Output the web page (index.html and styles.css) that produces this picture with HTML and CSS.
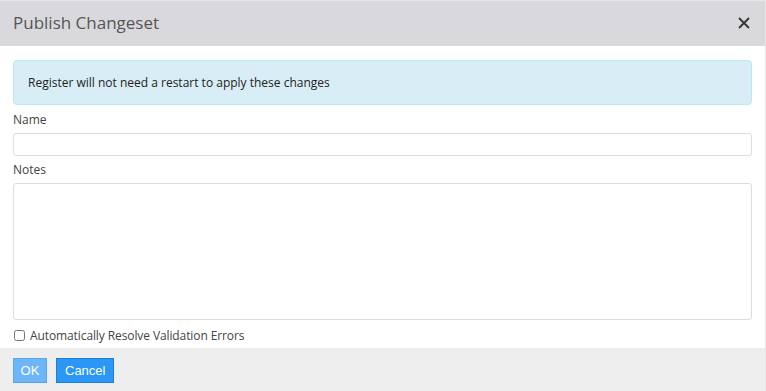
FILE: index.html
```html
<!DOCTYPE html>
<html>
  <head>
    <title>Publish Changeset</title>
    <meta charset="utf-8" />
    <link rel="stylesheet" href="styles.css">
  </head>
  <body>
    <div class="dialog">
      <div class="dialog_header">
        <span class="dialog_title">Publish Changeset</span>
        <svg class="close_button" width="12" height="12" viewBox="0 0 12 12">
          <path d="M1 1 L11 11 M11 1 L1 11" stroke="#333" stroke-width="1.8" fill="none" />
        </svg>
      </div>
      <div class="dialog_body">
        <div class="alert_info">Register will not need a restart to apply these changes</div>
        <label class="field_label" for="name_input">Name</label>
        <input class="text_input" id="name_input" type="text" />
        <label class="field_label notes_label" for="notes_input">Notes</label>
        <textarea class="text_area" id="notes_input"></textarea>
        <label class="check_row">
          <input class="check_box" type="checkbox" />
          Automatically Resolve Validation Errors
        </label>
      </div>
      <div class="dialog_footer">
        <input class="button button_disabled" type="button" value="OK" />
        <input class="button" type="button" value="Cancel" />
      </div>
    </div>
  </body>
</html>
```

FILE: styles.css
```css
* {
  margin: 0;
  padding: 0;
  box-sizing: border-box;
}

body {
  background-color: white;
  color: #333;
  font-family: "Open Sans", "Noto Sans", Arial, sans-serif;
  font-size: 12px;
}

.dialog {
  width: 766px;
  height: 391px;
  display: flex;
  flex-direction: column;
  border-right: 1px solid #e6e6e6;
  border-top: 1px solid #e6e6e6;
}

.dialog_header {
  background-color: #d9d9dd;
  height: 45px;
  padding: 0 15px 0 13px;
  display: flex;
  align-items: center;
  justify-content: space-between;
}

.dialog_title {
  font-size: 17px;
  color: #555;
  padding-bottom: 2px;
}

.close_button {
  display: block;
  margin-bottom: 2px;
}

.dialog_body {
  flex: 1;
  padding: 14px 13px 0 13px;
  display: flex;
  flex-direction: column;
}

.alert_info {
  background-color: #d9edf7;
  border: 1px solid #bce8f1;
  border-radius: 4px;
  height: 45px;
  padding: 0 14px;
  display: flex;
  align-items: center;
  color: #222;
}

.field_label {
  display: block;
  height: 18px;
  margin-top: 6px;
  margin-bottom: 4px;
  line-height: 18px;
  color: #444;
}

.notes_label {
  margin-top: 5px;
}

.text_input {
  height: 23px;
  width: 100%;
  border: 1px solid #ddd;
  border-radius: 3px;
  outline: none;
}

.text_area {
  height: 137px;
  width: 100%;
  border: 1px solid #ddd;
  border-radius: 3px;
  outline: none;
  resize: none;
}

.check_row {
  display: flex;
  align-items: center;
  height: 16px;
  margin-top: 7px;
  color: #444;
  letter-spacing: -0.1px;
}

.check_box {
  width: 11px;
  height: 11px;
  margin-right: 5px;
  margin-left: 1px;
}

.dialog_footer {
  background-color: #eeeeee;
  height: 43px;
  padding: 0 13px;
  display: flex;
  align-items: center;
  gap: 9px;
}

.button {
  appearance: none;
  -webkit-appearance: none;
  background-color: #2a96f5;
  border: 1px solid #1d7fd8;
  color: white;
  height: 25px;
  padding: 0 8px;
  font-family: "Liberation Sans", Arial, sans-serif;
  font-size: 13px;
  margin-top: 2px;
}

.button_disabled {
  background-color: #6db6f9;
  border-color: #5aa6ec;
  width: 34px;
  padding: 0;
}
```
